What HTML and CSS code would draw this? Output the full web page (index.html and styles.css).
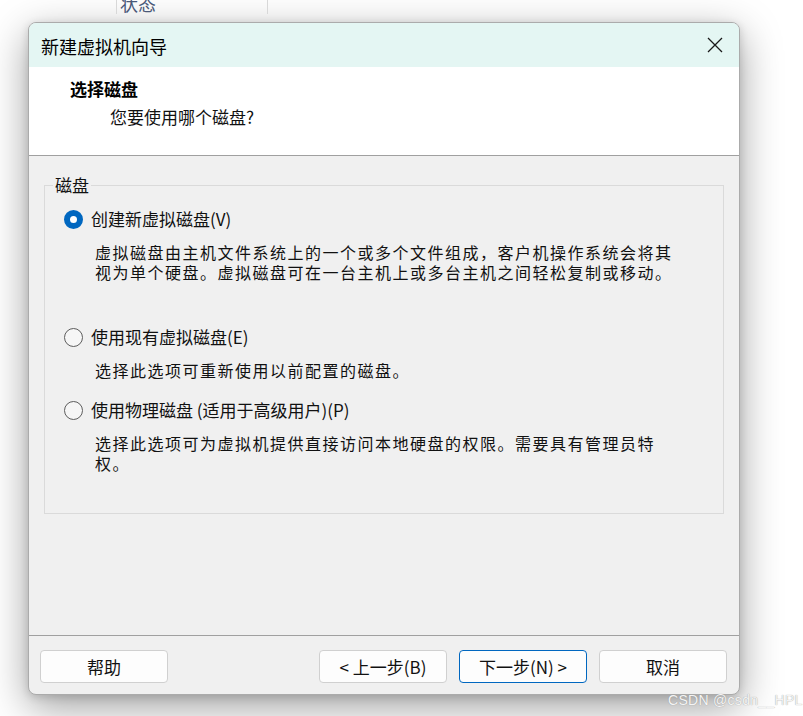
FILE: index.html
```html
<!DOCTYPE html>
<html lang="zh-CN">
<head>
<meta charset="utf-8">
<title>新建虚拟机向导</title>
<link rel="stylesheet" href="styles.css">
</head>
<body>
<div class="page">
  <div class="topstrip">
    <div class="col-cell"><span class="col-text">状态</span></div>
  </div>
  <div class="dialog">
    <div class="titlebar">
      <span class="title">新建虚拟机向导</span>
      <svg class="close" width="16" height="16" viewBox="0 0 16 16" aria-hidden="true">
        <path d="M1 1 L15 15 M15 1 L1 15" stroke="#1a1a1a" stroke-width="1.3" fill="none"/>
      </svg>
    </div>
    <div class="header">
      <div class="h-title">选择磁盘</div>
      <div class="h-sub">您要使用哪个磁盘?</div>
    </div>
    <div class="content">
      <fieldset class="group">
        <legend class="legend">磁盘</legend>
        <div class="option">
          <span class="radio checked"></span>
          <span class="label">创建新虚拟磁盘(V)</span>
        </div>
        <div class="desc">
          <div class="dline">虚拟磁盘由主机文件系统上的一个或多个文件组成，客户机操作系统会将其</div>
          <div class="dline">视为单个硬盘。虚拟磁盘可在一台主机上或多台主机之间轻松复制或移动。</div>
        </div>
        <div class="option opt2">
          <span class="radio"></span>
          <span class="label">使用现有虚拟磁盘(E)</span>
        </div>
        <div class="desc">
          <div class="dline">选择此选项可重新使用以前配置的磁盘。</div>
        </div>
        <div class="option opt3">
          <span class="radio"></span>
          <span class="label">使用物理磁盘 (适用于高级用户)(P)</span>
        </div>
        <div class="desc">
          <div class="dline">选择此选项可为虚拟机提供直接访问本地硬盘的权限。需要具有管理员特</div>
          <div class="dline">权。</div>
        </div>
      </fieldset>
    </div>
    <div class="footer">
      <button class="btn">帮助</button>
      <div class="spacer"></div>
      <button class="btn">&lt; 上一步(B)</button>
      <button class="btn primary">下一步(N) &gt;</button>
      <button class="btn">取消</button>
    </div>
  </div>
  <div class="watermark">CSDN @csdn__HPL</div>
</div>
</body>
</html>
```
FILE: styles.css
```css
html, body {
  margin: 0;
  padding: 0;
  background: #ffffff;
}
body {
  width: 803px;
  height: 716px;
  overflow: hidden;
  font-family: "Noto Sans CJK SC", "Noto Sans", sans-serif;
  color: #111;
}
.page {
  position: relative;
  width: 803px;
  height: 716px;
}
.topstrip {
  height: 22px;
  padding-left: 116px;
  display: flex;
  overflow: hidden;
}
.col-cell {
  width: 150px;
  height: 14px;
  border-left: 1px solid #d8d8d8;
  border-right: 1px solid #d8d8d8;
  overflow: hidden;
}
.col-text {
  display: block;
  margin-top: -9px;
  padding-left: 3px;
  font-size: 18px;
  line-height: 24px;
  color: #4a5878;
}
.dialog {
  margin-left: 28px;
  width: 712px;
  height: 673px;
  box-sizing: border-box;
  border: 1px solid #ababab;
  border-radius: 8px;
  overflow: hidden;
  background: #f0f0f0;
  display: flex;
  flex-direction: column;
  box-shadow: 0 12px 40px rgba(0, 0, 0, 0.38), 0 2px 8px rgba(0, 0, 0, 0.14);
}
.titlebar {
  height: 44px;
  flex: none;
  background: #e4f6f3;
  display: flex;
  align-items: center;
  padding: 0 16px 0 12px;
}
.title {
  flex: 1;
  font-size: 18px;
  line-height: 24px;
  color: #000;
  margin-top: 1px;
}
.close {
  display: block;
  width: 16px;
  height: 16px;
}
.header {
  height: 78px;
  flex: none;
  background: #ffffff;
  border-bottom: 1px solid #a0a0a0;
  padding-top: 10px;
}
.h-title {
  padding-left: 41px;
  font-size: 17px;
  font-weight: 700;
  line-height: 24px;
  color: #000;
}
.h-sub {
  padding-left: 81px;
  margin-top: 4px;
  font-size: 17px;
  line-height: 24px;
  color: #111;
}
.content {
  flex: 1;
  padding: 17px 15px 0 15px;
}
.group {
  margin: 0;
  padding: 10px 0 40px 0;
  border: 1px solid #dadada;
  min-width: 0;
}
.legend {
  margin-left: 8px;
  padding: 0 2px;
  font-size: 17px;
  line-height: 24px;
  color: #111;
}
.option {
  display: flex;
  align-items: center;
  height: 24px;
  padding-left: 19px;
}
.opt2 { margin-top: 43px; }
.opt3 { margin-top: 18px; }
.radio {
  flex: none;
  width: 19px;
  height: 19px;
  box-sizing: border-box;
  border-radius: 50%;
  border: 1px solid #5d5d5d;
  background: #f6f6f6;
  margin-right: 8px;
}
.radio.checked {
  border: 6px solid #0067c0;
  background: #ffffff;
}
.label {
  font-size: 17px;
  line-height: 24px;
  color: #111;
  white-space: nowrap;
}
.desc {
  margin-top: 11px;
  padding-left: 50px;
  display: flex;
  flex-direction: column;
  gap: 0;
}
.dline {
  height: 20px;
  font-size: 16px;
  line-height: 20px;
  letter-spacing: 1.5px;
  color: #111;
  white-space: nowrap;
}
.footer {
  flex: none;
  border-top: 1px solid #a0a0a0;
  padding: 14px 12px 11px 11px;
  display: flex;
  gap: 12px;
}
.spacer {
  flex: 1;
}
.btn {
  width: 128px;
  height: 33px;
  box-sizing: border-box;
  border: 1px solid #d0d0d0;
  border-radius: 4px;
  background: #fdfdfd;
  font-family: "Noto Sans CJK SC", "Noto Sans", sans-serif;
  font-size: 17px;
  line-height: 20px;
  color: #111;
  padding: 0;
}
.btn.primary {
  border-color: #0067c0;
}
.watermark {
  position: absolute;
  left: 668px;
  top: 691px;
  font-family: "Liberation Sans", Arial, sans-serif;
  font-size: 14px;
  line-height: 18px;
  color: #f4f4f4;
  text-shadow: 0 0 1px #8a8a8a;
  letter-spacing: 0.3px;
}
```
